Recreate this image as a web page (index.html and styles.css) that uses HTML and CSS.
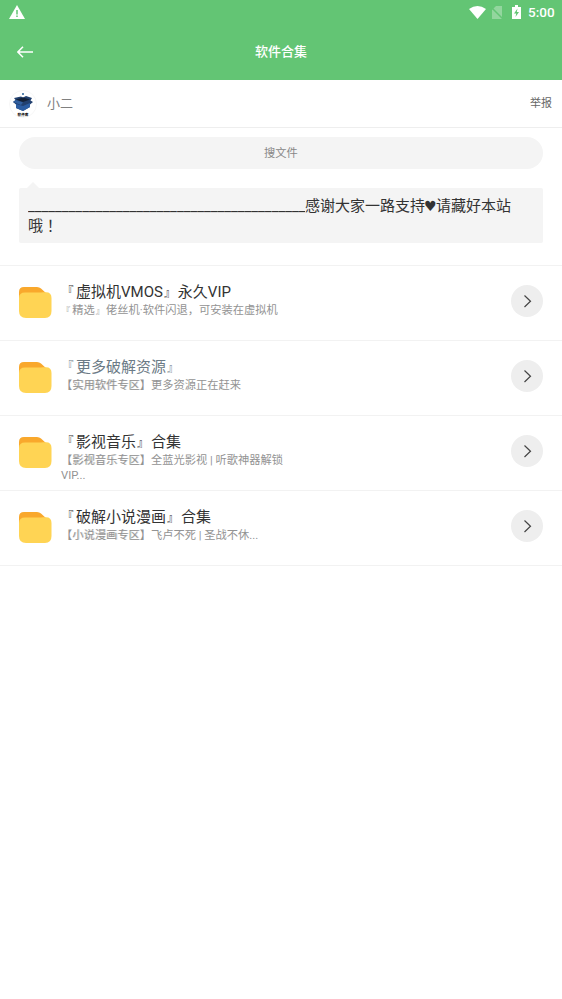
FILE: index.html
```html
<!DOCTYPE html>
<html lang="zh-CN">
<head>
<meta charset="utf-8">
<title>软件合集</title>
<link rel="stylesheet" href="styles.css">
</head>
<body>
<svg width="0" height="0" class="defs">
  <symbol id="folder" viewBox="0 0 33 32">
    <path d="M0 20V5Q0 0 5 0H18Q20.500 0 22 1.500L28 7V20Z" fill="#f9a82c"/>
    <path d="M0 11Q0 5.500 6 5.500H22L24 5.200H27Q32.500 5.200 32.500 11V24Q32.500 31 26 31H7Q0 31 0 24Z" fill="#ffd454"/>
  </symbol>
  <symbol id="chevron" viewBox="0 0 32 32">
    <circle cx="16" cy="16" r="16" fill="#eee"/>
    <path d="M13.500 10.500L19.500 16.200L13.500 22" fill="none" stroke="#444" stroke-width="1.200"/>
  </symbol>
</svg>
<header class="top">
  <div class="status">
    <svg class="warn" width="16" height="14" viewBox="0 0 16 14"><path d="M8 0L16 14H0Z" fill="#fff"/><path d="M8 5V9.500M8 10.500V12" stroke="#63c574" stroke-width="1.500"/></svg>
    <svg class="wifi" width="17" height="13" viewBox="0 0 17 13"><path d="M0 3Q8.500 -3 17 3L8.500 13Z" fill="#fff"/></svg>
    <svg class="sim" width="12" height="13" viewBox="0 0 12 13"><path d="M1 4L5 0H11V13H1Z" fill="#93d69e"/><path d="M1 2L12 13" stroke="#63c574" stroke-width="1.500"/></svg>
    <svg class="battery" width="9" height="14" viewBox="0 0 9 14"><path d="M0 2H3V0H6V2H9V14H0Z" fill="#fff"/><path d="M5.500 3.500L2 8.500H4.200L3.500 12L7 7H4.800Z" fill="#63c574"/></svg>
    <span class="clock">5:00</span>
  </div>
  <div class="nav">
    <svg class="back" width="16" height="12" viewBox="0 0 16 12"><path d="M6 .7L.9 6L6 11.300M1 6H16" fill="none" stroke="#fff" stroke-width="1.500"/></svg>
    <h1>软件合集</h1>
  </div>
</header>
<section class="user">
  <svg class="avatar" width="28" height="28" viewBox="0 0 28 28">
    <circle cx="14" cy="14" r="13.500" fill="#fff" stroke="#f7f7f7"/>
    <path d="M5 8L12 6.500L14 7.500L17 6L23 8L21.500 10.500L24 12L21 14.500V17L14 21L7 18V14.500L4 12L6.500 10Z" fill="#22406f"/>
    <path d="M7 14L14 16L21 13V17L14 21L7 18Z" fill="#2c5da2"/>
    <path d="M7 9.500L14 7.500L21 9.500L14 12Z" fill="#152238"/>
    <path d="M7 10L14 12.500L12 15L4 12Z" fill="#315f9f"/>
    <circle cx="14" cy="4" r="1" fill="#286098"/>
    <text x="14" y="25.500" text-anchor="middle" class="avatar-text">软件库</text>
  </svg>
  <span class="name">小二</span>
  <span class="report">举报</span>
</section>
<div class="search">搜文件</div>
<section class="notice"><span class="rule">_________________________________________</span>感谢大家一路支持<span class="heart">♥</span>请藏好本站<br>哦<span class="mark" lang="zh-TW">！</span></section>
<main class="list">
  <article class="row">
    <svg class="folder"><use href="#folder"/></svg>
    <div class="copy"><h2><span class="open">『</span>虚拟机VMOS<span class="close">』</span>永久VIP</h2><p><span class="open">『</span>精选<span class="close">』</span>佬丝机·软件闪退，可安装在虚拟机</p></div>
    <svg class="go"><use href="#chevron"/></svg>
  </article>
  <article class="row">
    <svg class="folder"><use href="#folder"/></svg>
    <div class="copy"><h2 class="muted"><span class="open">『</span>更多破解资源<span class="close">』</span></h2><p>【<span class="tag">实用软件专区</span>】更多资源正在赶来</p></div>
    <svg class="go"><use href="#chevron"/></svg>
  </article>
  <article class="row">
    <svg class="folder"><use href="#folder"/></svg>
    <div class="copy"><h2><span class="open">『</span>影视音乐<span class="close">』</span>合集</h2><p>【<span class="tag">影视音乐专区</span>】全蓝光影视 | 听歌神器解锁<br>VIP...</p></div>
    <svg class="go"><use href="#chevron"/></svg>
  </article>
  <article class="row">
    <svg class="folder"><use href="#folder"/></svg>
    <div class="copy"><h2><span class="open">『</span>破解小说漫画<span class="close">』</span>合集</h2><p>【<span class="tag">小说漫画专区</span>】飞卢不死 | 圣战不休...</p></div>
    <svg class="go"><use href="#chevron"/></svg>
  </article>
</main>
</body>
</html>
```
FILE: styles.css
```css
* { box-sizing: border-box; }
body { margin: 0; min-height: 999px; background: #fff; color: #333; font-family: Roboto, "Noto Sans CJK SC", sans-serif; }
.defs { display: block; position: absolute; }
.top { height: 80px; background: #63c574; color: #fff; }
.status { height: 24px; display: flex; align-items: center; padding: 0 8px 0 9px; }
.wifi { margin-left: auto; margin-right: 5px; }
.sim { margin-right: 9px; }
.battery { margin-right: 7px; }
.clock { font-size: 13.5px; font-weight: 500; line-height: 24px; width: 26px; white-space: nowrap; }
.nav { height: 56px; display: grid; grid-template-columns: 60px 1fr 60px; align-items: center; }
.back { margin-left: 17px; }
h1 { margin: 0; text-align: center; font-size: 13px; line-height: 20px; font-weight: 500; }
.user { height: 48px; border-bottom: 1px solid #eee; display: flex; align-items: center; padding: 0 10px 0 9px; }
.avatar-text { font-size: 3.6px; font-weight: 700; }
.name { margin: 0 0 3px 10px; font-size: 13px; color: #808080; }
.report { margin: 0 0 3px auto; font-size: 11px; color: #666; }
.search { height: 32px; margin: 9px 19px 0; border-radius: 16px; background: #f4f4f4; color: #888; text-align: center; font-size: 11.25px; line-height: 33px; }
.notice { position: relative; height: 55px; margin: 19px 19px 22px; padding: 8px 9px; border-radius: 2px; background: #f4f4f4; font-size: 15px; line-height: 20px; white-space: nowrap; }
.notice::before { content: ""; position: absolute; left: 8px; top: -6px; border: 6px solid transparent; border-top: 0; border-bottom-color: #f4f4f4; }
.rule { display: inline-block; width: 277px; overflow: hidden; vertical-align: top; }
.heart { display: inline-block; width: 11px; height: 20px; vertical-align: top; font-family: "DejaVu Sans", sans-serif; font-size: 14px; text-indent: -1px; }
.mark { font-family: "Noto Sans CJK TC", sans-serif; line-height: 1; }
.open, .close { display: inline-block; width: 1.3333em; font-size: .75em; line-height: 1; }
.open { padding-left: .1em; vertical-align: .14em; }
.close { padding-left: .12em; }
.row { height: 75px; border-top: 1px solid #f2f2f2; display: flex; align-items: flex-start; padding: 0 19px; }
.row:last-child { height: 76px; border-bottom: 1px solid #f2f2f2; }
.folder { width: 33px; height: 32px; margin-top: 21px; flex: none; }
.copy { margin: 16px 0 0 9px; width: 240px; white-space: nowrap; }
h2 { margin: 0; height: 20px; font-size: 15px; line-height: 20px; font-weight: 400; }
.muted { color: #6c7b86; }
p { margin: 1px 0 0; font-size: 11.25px; line-height: 15px; color: #939393; }
.tag { text-shadow: 1px 0 rgba(140, 140, 140, .35); }
.go { width: 32px; height: 32px; margin: 19px 0 0 auto; }
```
